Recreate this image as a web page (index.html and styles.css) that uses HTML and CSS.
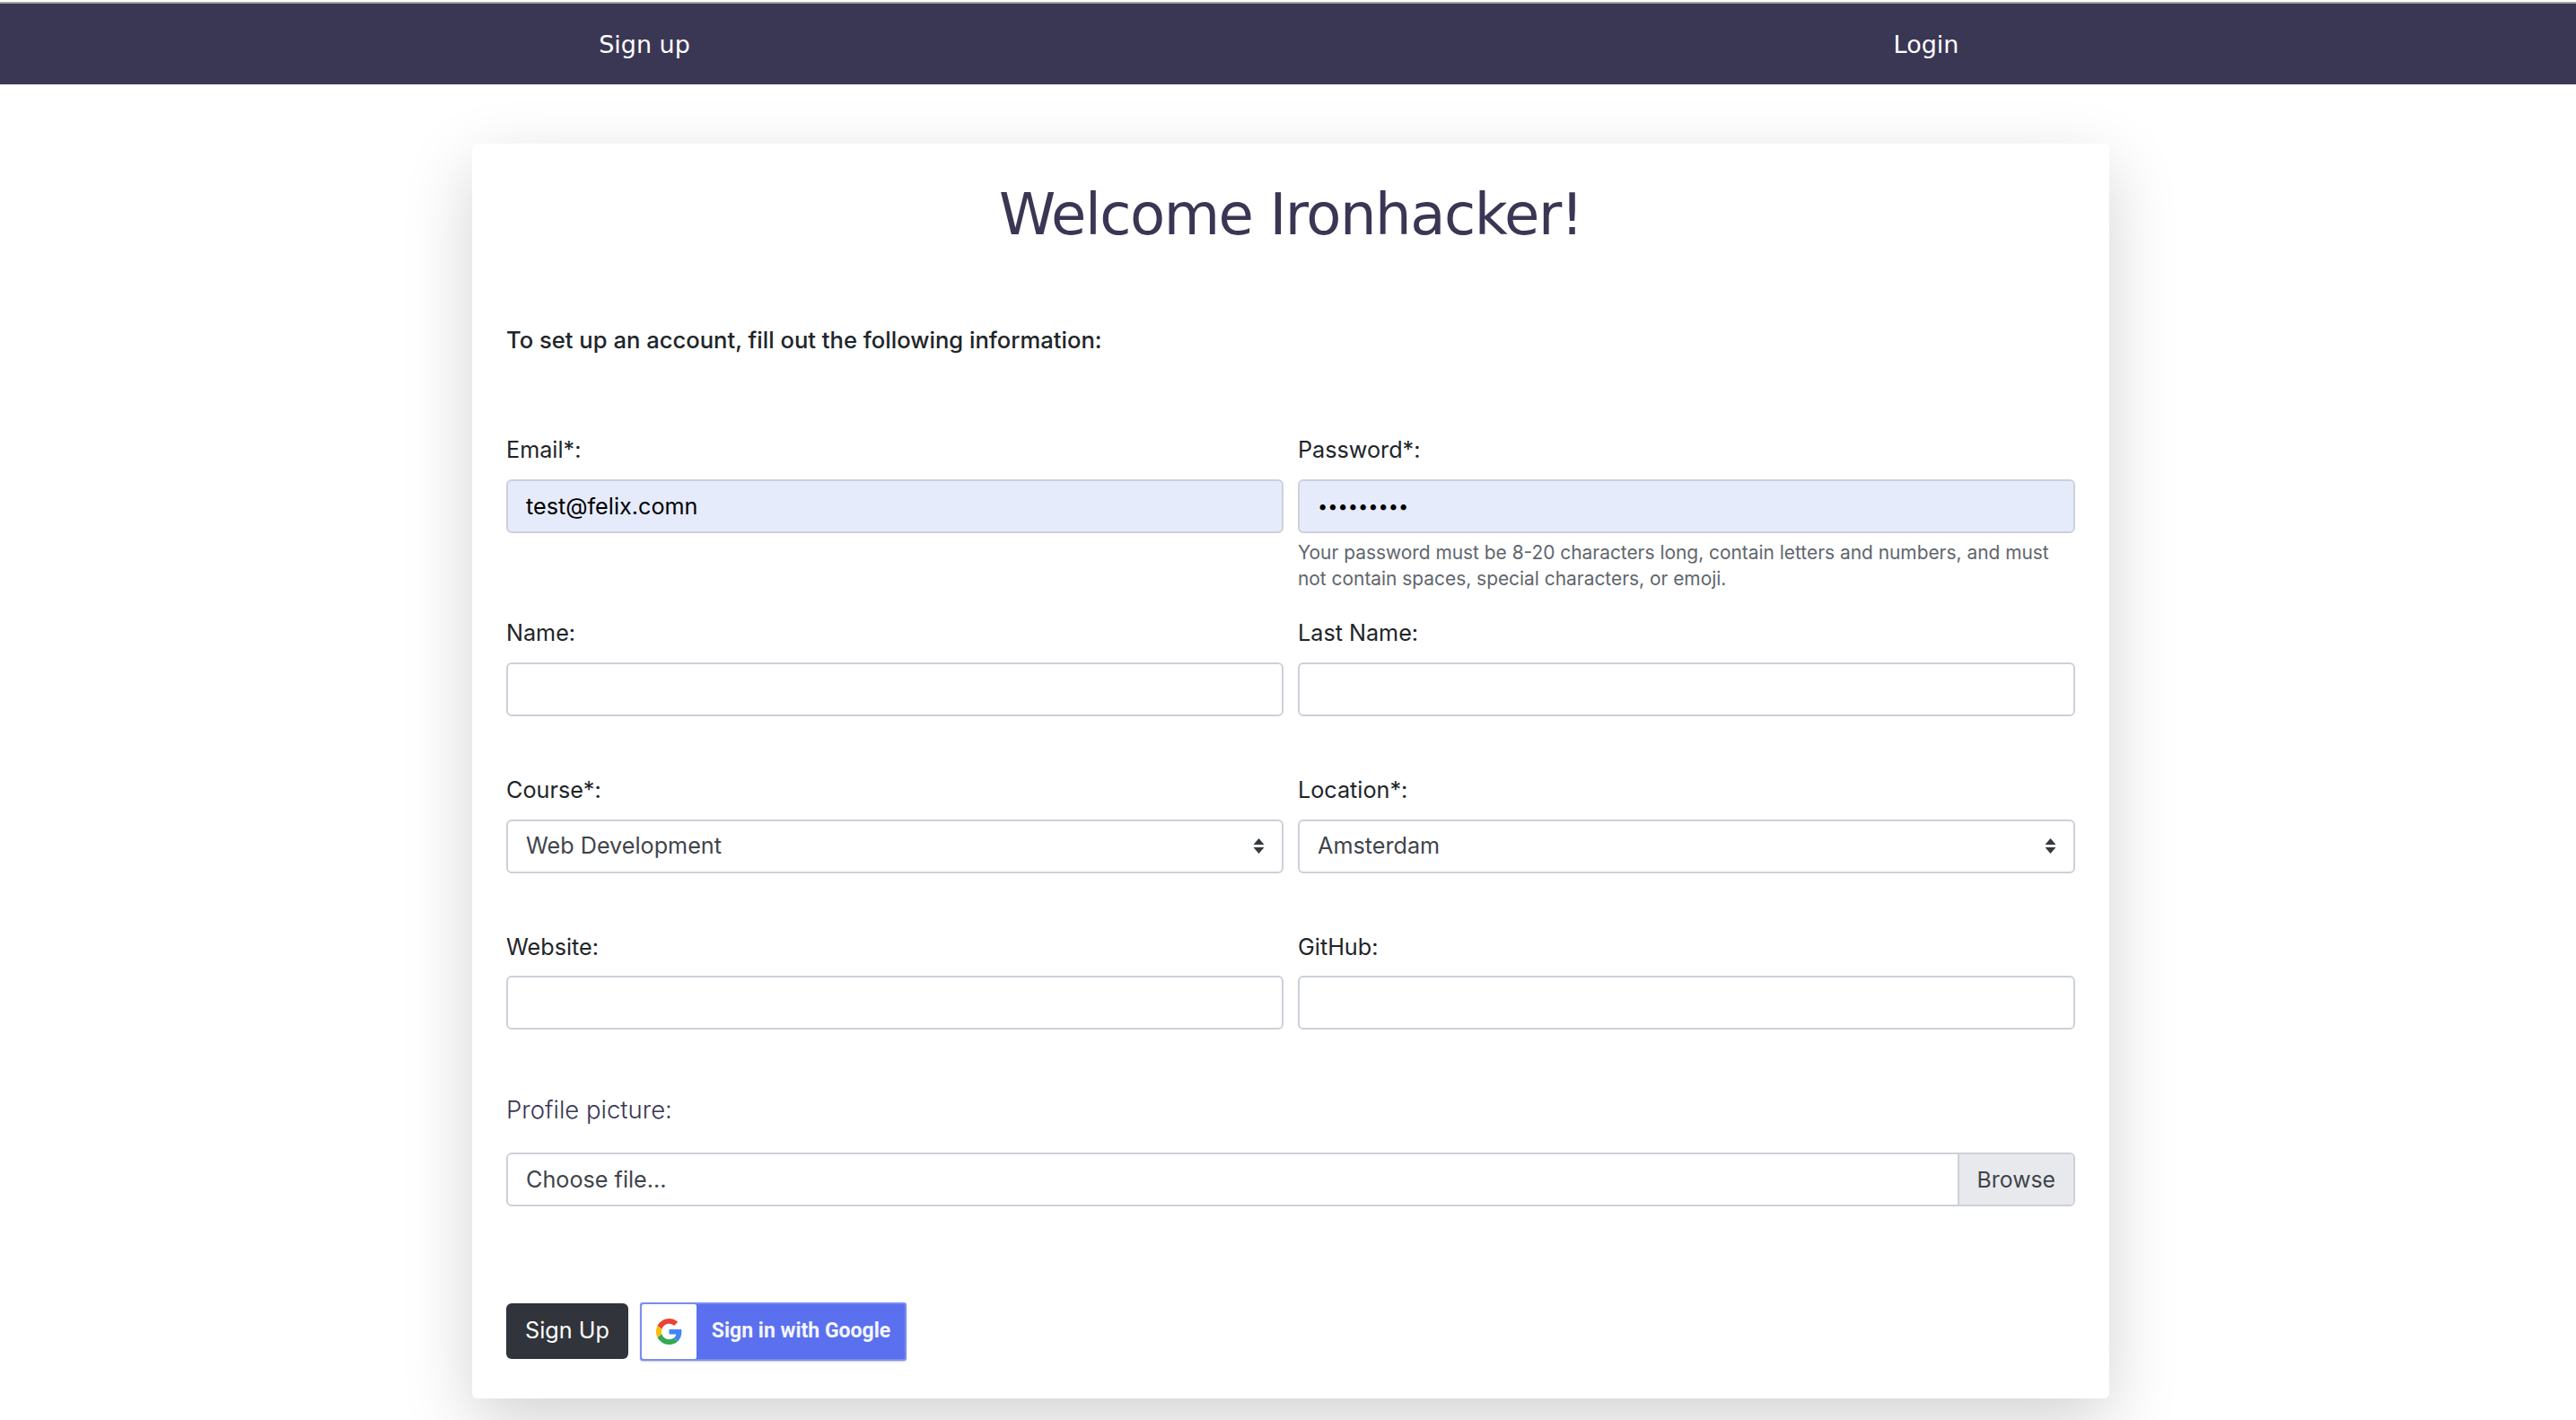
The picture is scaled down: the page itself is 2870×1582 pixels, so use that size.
FILE: index.html
```html
<!DOCTYPE html>
<html lang="en">
<head>
    <meta charset="UTF-8">
    <meta name="viewport" content="width=device-width, initial-scale=1.0">
    <title>Sign up</title>
    <link rel="stylesheet" href="styles.css">
</head>
<body>
    <nav class="topbar">
        <a href="#" class="topbar-link">Sign up</a>
        <a href="#" class="topbar-link">Login</a>
    </nav>

    <main class="card">
        <h1 class="card-title">Welcome Ironhacker!</h1>
        <p class="intro">To set up an account, fill out the following information:</p>

        <form onsubmit="event.preventDefault();">
            <div class="form-row form-row-help">
                <div class="field">
                    <label for="email">Email*:</label>
                    <input class="control autofilled" type="email" id="email" value="test@felix.comn">
                </div>
                <div class="field">
                    <label for="password">Password*:</label>
                    <input class="control autofilled password" type="password" id="password" value="123456789">
                    <small class="help">Your password must be 8-20 characters long, contain letters and numbers, and must not contain spaces, special characters, or emoji.</small>
                </div>
            </div>

            <div class="form-row">
                <div class="field">
                    <label for="name">Name:</label>
                    <input class="control" type="text" id="name">
                </div>
                <div class="field">
                    <label for="lastname">Last Name:</label>
                    <input class="control" type="text" id="lastname">
                </div>
            </div>

            <div class="form-row">
                <div class="field">
                    <label for="course">Course*:</label>
                    <div class="select-wrap">
                        <select class="control" id="course">
                            <option>Web Development</option>
                        </select>
                        <svg class="select-arrows" width="13" height="17" viewBox="0 0 13 17"><path d="M6.500 0l6 7H.5zM6.500 17l-6-7h12z"/></svg>
                    </div>
                </div>
                <div class="field">
                    <label for="location">Location*:</label>
                    <div class="select-wrap">
                        <select class="control" id="location">
                            <option>Amsterdam</option>
                        </select>
                        <svg class="select-arrows" width="13" height="17" viewBox="0 0 13 17"><path d="M6.500 0l6 7H.5zM6.500 17l-6-7h12z"/></svg>
                    </div>
                </div>
            </div>

            <div class="form-row form-row-last">
                <div class="field">
                    <label for="website">Website:</label>
                    <input class="control" type="text" id="website">
                </div>
                <div class="field">
                    <label for="github">GitHub:</label>
                    <input class="control" type="text" id="github">
                </div>
            </div>

            <div class="picture">
                <div class="picture-label">Profile picture:</div>
                <div class="file-input">
                    <span class="file-name">Choose file...</span>
                    <span class="file-browse">Browse</span>
                </div>
            </div>

            <div class="actions">
                <button type="submit" class="btn-signup">Sign Up</button>
                <a href="#" class="btn-google">
                    <span class="google-icon">
                        <svg width="29" height="29" viewBox="0 0 48 48">
                            <path fill="#EA4335" d="M24 9.500c3.540 0 6.710 1.220 9.210 3.600l6.850-6.850C35.900 2.380 30.470 0 24 0 14.620 0 6.510 5.380 2.560 13.220l7.980 6.190C12.430 13.720 17.740 9.500 24 9.500z"/>
                            <path fill="#4285F4" d="M46.980 24.550c0-1.570-.15-3.090-.38-4.550H24v9.020h12.940c-.58 2.960-2.260 5.480-4.780 7.180l7.730 6c4.510-4.180 7.090-10.360 7.090-17.650z"/>
                            <path fill="#FBBC05" d="M10.530 28.590c-.48-1.450-.76-2.990-.76-4.590s.27-3.140.76-4.590l-7.980-6.190C.92 16.460 0 20.120 0 24c0 3.880.92 7.540 2.560 10.780l7.970-6.190z"/>
                            <path fill="#34A853" d="M24 48c6.480 0 11.930-2.130 15.890-5.810l-7.730-6c-2.150 1.450-4.920 2.300-8.160 2.300-6.260 0-11.570-4.220-13.470-9.910l-7.980 6.190C6.510 42.620 14.620 48 24 48z"/>
                        </svg>
                    </span>
                    <span class="google-text">Sign in with Google</span>
                </a>
            </div>
        </form>
    </main>
</body>
</html>
```

FILE: styles.css
```css
body {
    margin: 0;
    padding-top: 2px;
    background: #fff;
    color: #212529;
    font-family: Inter, "Liberation Sans", sans-serif;
    font-size: 25.2px;
    line-height: 1.5;
}

.topbar {
    display: grid;
    grid-template-columns: 1436px 1420px;
    align-items: center;
    height: 88px;
    padding-top: 2px;
    border-top: 2px solid #a6a6a6;
    background: #3a3754;
}
.topbar-link {
    justify-self: center;
    color: #fff;
    font-family: "DejaVu Sans", sans-serif;
    font-size: 27px;
    text-decoration: none;
}

.card {
    width: 1824px;
    box-sizing: border-box;
    margin: 66px 0 24px 526px;
    padding: 41px 38px 42px;
    border-radius: 6px;
    background: #fff;
    box-shadow: 0 26px 77px rgba(0, 0, 0, 0.175);
}
.card-title {
    margin: 0;
    text-align: center;
    color: #3a3654;
    font-family: "DejaVu Sans", sans-serif;
    font-size: 64px;
    font-weight: 400;
    letter-spacing: -1.45px;
    line-height: 1.2;
}
.intro {
    margin: 82px 0 85px;
    font-size: 25.6px;
    font-weight: 500;
}

.form-row {
    display: grid;
    grid-template-columns: 1fr 1fr;
    column-gap: 16px;
    margin-bottom: 64px;
}
.form-row-help { margin-bottom: 28px; }
.form-row-last { margin-bottom: 69px; }

.field label {
    display: block;
    margin-bottom: 13px;
}
.control {
    display: block;
    width: 100%;
    height: 60px;
    box-sizing: border-box;
    padding: 0 20px;
    border: 2px solid #ccd1d8;
    border-radius: 6px;
    background: #fff;
    color: #3f454b;
    font: inherit;
    appearance: none;
}
.autofilled {
    background: #e6ebfb;
    color: #000;
}
.password { font-size: 20px; }
.help {
    display: block;
    margin-top: 7px;
    color: #5f666d;
    font-size: 20.9px;
    line-height: 29px;
}

.select-wrap { position: relative; }
.select-arrows {
    position: absolute;
    top: 21px;
    right: 21px;
    fill: #343a40;
}

.picture-label {
    margin-bottom: 26px;
    color: #3a3654;
    font-size: 27.5px;
    font-weight: 300;
}
.file-input {
    display: flex;
    height: 60px;
    box-sizing: border-box;
    border: 2px solid #ccd1d8;
    border-radius: 6px;
    color: #3f454b;
}
.file-name {
    flex: 1;
    padding-left: 20px;
    line-height: 56px;
}
.file-browse {
    padding: 0 20px;
    border-left: 2px solid #ccd1d8;
    border-radius: 0 4px 4px 0;
    background: #e8e9ed;
    font-size: 24.8px;
    line-height: 56px;
}

.actions {
    display: flex;
    align-items: center;
    gap: 13px;
    margin-top: 107px;
}
.btn-signup {
    height: 62px;
    padding: 0 21px;
    border: 0;
    border-radius: 6px;
    background: #31343a;
    color: #fff;
    font: inherit;
    cursor: pointer;
}
.btn-google {
    display: flex;
    align-items: center;
    height: 65px;
    width: 297px;
    box-sizing: border-box;
    border: 2px solid #7a8df2;
    border-radius: 3px;
    background: #5b70ef;
    box-shadow: 0 1px 2px rgba(0, 0, 0, 0.2);
    color: #f4f5fe;
    font-family: Roboto, sans-serif;
    font-size: 23px;
    font-weight: 700;
    text-decoration: none;
}
.google-icon {
    display: flex;
    align-items: center;
    justify-content: center;
    width: 61px;
    height: 100%;
    border-radius: 2px;
    background: #fff;
}
.google-text { margin-left: 17px; }
```
